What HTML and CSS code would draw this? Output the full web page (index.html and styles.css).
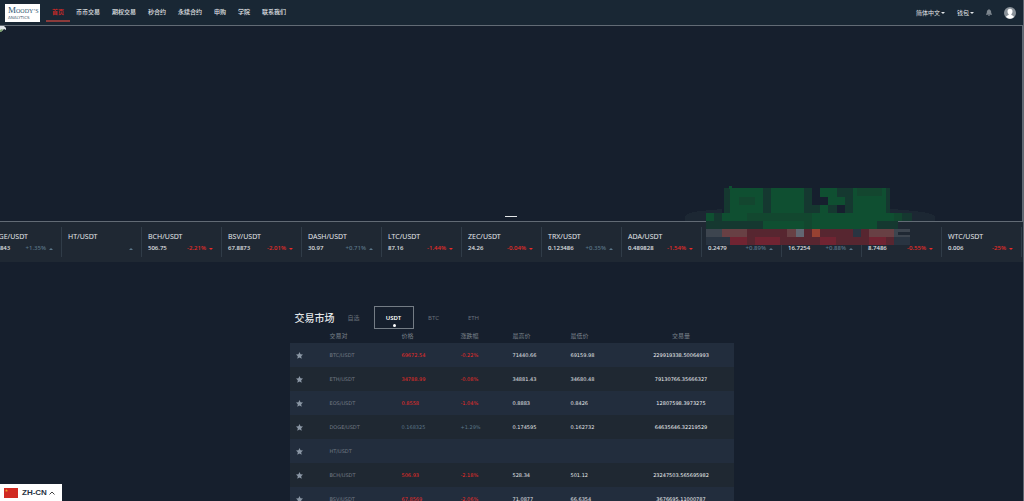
FILE: index.html
```html
<!DOCTYPE html>
<html lang="zh-CN">
<head>
<meta charset="utf-8">
<title>交易市场</title>
<link rel="stylesheet" href="styles.css">
</head>
<body>
<header class="topbar">
  <a class="logo" href="#"><span class="logo-name">M<small>OODY’S</small></span><span class="logo-sub">ANALYTICS</span></a>
  <nav class="nav">
    <a class="active" href="#">首页</a><a href="#">币币交易</a><a href="#">期权交易</a><a href="#">秒合约</a><a href="#">永续合约</a><a href="#">申购</a><a href="#">学院</a><a href="#">联系我们</a>
  </nav>
  <div class="tools">
    <button class="drop" type="button">简体中文<i class="tri down"></i></button>
    <button class="drop" type="button">钱包<i class="tri down"></i></button>
    <button class="icon" type="button" aria-label="通知"><svg class="bell" viewBox="0 0 14 16"><path d="M7 0a1.200 1.200 0 0 1 1.200 1.300C10.600 2 12 4 12 6.500c0 3.500.8 4.500 2 5.500v1H0v-1c1.200-1 2-2 2-5.500C2 4 3.400 2 5.800 1.300A1.200 1.200 0 0 1 7 0zM5 14h4a2 2 0 0 1-4 0z"/></svg></button>
    <button class="icon" type="button" aria-label="账户"><svg class="avatar" viewBox="0 0 24 24"><circle cx="12" cy="12" r="12" fill="#8a9299"/><path fill="#fff" d="M12 3.500c3.200 0 5 2.200 5 5.300 0 2.200-1 4.300-2.300 5.400v1.800c1.800 1 4.300 1.500 5.300 3.500A11.500 11.500 0 0 1 12 23.500 11.500 11.500 0 0 1 4 19.500c1-2 3.500-2.500 5.300-3.500v-1.800C8 13.100 7 11 7 8.800c0-3.100 1.800-5.300 5-5.300z"/></svg></button>
  </div>
</header>
<main>
  <section class="hero">
    <svg class="broken" viewBox="0 0 7 7"><path fill="#dfe5e8" d="M0 0h4l2 2v2L4 3 2 5 0 6z"/><path fill="#7ba06f" d="M0 4l2-1 1 1-2 2H0z"/></svg>
    <button class="dash" type="button" aria-label="1"></button>
    <svg class="mosaic" viewBox="0 0 250 66" aria-hidden="true" shape-rendering="crispEdges">
      <path fill="#1c2733" d="M0 41v-5c5-6 25-5 45-8h150c20 2 50 3 55 8v5z"/>
      <path fill="#153830" d="M37 8h168v25H37zM21 33h206v8H21zM21 41h192v8H21z"/>
      <path fill="#161f2e" d="M37 8h2v25h-2zM127 17h18v8h-18zM152 25h8v8h-8zM127 8h9v9h-9z"/>
      <path fill="#0f4f31" d="M45 8h33v25H45zM86 8h33v25H86zM135 8h17v9h-17zM143 17h17v8h-17zM135 25h8v8h-8zM168 8h33v25h-33z"/>
      <path fill="#0f4f31" d="M21 33h8v8h-8zM37 33h25v8H37zM127 33h82v8h-82zM78 41h114v8H78z"/>
      <path fill="#12472f" d="M62 33h65v8H62zM209 33h8v8h-8zM119 41h8v8h-8z"/>
      <path fill="#0f4f31" d="M44 6h3v3h-3z"/><path fill="#13462f" d="M54 17h16v8H54zM172 8h25v8h-25z"/>
      <path fill="#572630" d="M62 49h147v16H62z"/>
      <path fill="#702432" d="M45 57h17v8H45zM70 57h25v8H70zM135 57h16v8h-16zM184 57h17v8h-17z"/>
      <path fill="#684044" d="M37 49h25v8H37zM102 49h9v8h-9zM184 49h25v8h-25z"/>
      <path fill="#3d454f" d="M21 49h16v8H21zM209 49h16v3h-12v3h12v2h-16z"/>
      <path fill="#293441" d="M21 57h24v8H21zM209 57h16v8h-16zM168 49h8v8h-8z"/>
      <path fill="#626672" d="M111 49h8v8h-8z"/><path fill="#974132" d="M127 49h8v8h-8z"/>
    </svg>
  </section>
  <section class="ticker" id="ticker"></section>
  <section class="market">
    <div class="tabs">
      <h2>交易市场</h2>
      <button type="button">自选</button><button class="on" type="button">USDT</button><button type="button">BTC</button><button type="button">ETH</button>
    </div>
    <table>
      <thead><tr><th class="c-star"></th><th class="c-pair">交易对</th><th class="c-price">价格</th><th class="c-change">涨跌幅</th><th class="c-high">最高价</th><th class="c-low">最低价</th><th class="c-vol">交易量</th></tr></thead>
      <tbody id="rows"></tbody>
    </table>
  </section>
</main>
<button class="lang" type="button"><svg class="flag" viewBox="0 0 14 10"><path fill="#d12a22" d="M0 0h14v10H0z"/><path fill="#f0a030" d="M2.500 1l.4 1.100H4l-.9.700.3 1.100-.9-.7-.9.7.3-1.100-.9-.7h1.100z"/></svg>ZH-CN<svg class="chev" viewBox="0 0 6 4"><path d="M.5 3.500L3 1l2.500 2.500"/></svg></button>
<script src="app.js"></script>
</body>
</html>
```
FILE: styles.css
```css
* { box-sizing: border-box; }
body {
  margin: 0;
  height: 100vh;
  overflow: hidden;
  border-right: 1px solid #5d6670;
  background: #161f2d;
  color: #e2e5e8;
  font: 6px/8px "Noto Sans", "Noto Sans CJK SC", sans-serif;
}
button { border: 0; padding: 0; background: none; color: inherit; font: inherit; }
a { color: inherit; text-decoration: none; }
.topbar { display: flex; align-items: center; height: 25px; padding: 0 7px 0 5px; background: #192734; }
.logo {
  display: flex; flex-direction: column; justify-content: center;
  flex: none; width: 35px; height: 18px; padding-left: 3px; margin-right: 6px;
  background: #fff; color: #2d5673; font-family: "Liberation Serif", serif;
}
.logo-name { font-size: 9px; line-height: 8px; white-space: nowrap; }
.logo-name small { font-size: 6px; }
.logo-sub { font: 4px/5px "DejaVu Sans", sans-serif; color: #48606f; }
.nav { display: flex; flex: 1; }
.nav a { padding: 2px 6px 4px; border-bottom: 2px solid transparent; font-weight: 500; margin-top: 2px; }
.nav .active { color: #e02a26; border-color: #8b3b3b; }
.tools { display: flex; align-items: center; gap: 12px; }
.drop { display: flex; align-items: center; gap: 1px; }
.icon { display: flex; }
.bell { width: 6px; height: 7px; fill: #7c858d; }
.avatar { width: 12px; height: 12px; }
.tri { border: 2px solid transparent; }
.tri.down { border-top-color: currentColor; border-bottom: 0; }
.tri.up { border-bottom-color: currentColor; border-top: 0; }
.hero { position: relative; height: 197px; border: 1px solid #626b75; border-left: 0; }
.broken { display: block; width: 7px; height: 7px; }
.dash { position: absolute; left: 50%; bottom: 4px; width: 12px; height: 1px; margin-left: -6px; background: #e3e6e8; }
.mosaic { position: absolute; z-index: 1; left: 67%; top: 154px; width: 250px; height: 66px; }
.ticker { display: flex; justify-content: flex-end; overflow: hidden; height: 40px; padding: 5px 1px 5px 0; background: #1f2833; }
.coin {
  flex: none; width: 80px; padding: 4px 8px 0 6px;
  border-right: 1px solid #303c48; font-size: 6px; line-height: 11px;
}
.coin h3 { margin: 0 0 1px; font-size: 7px; line-height: 11px; font-weight: 400; }
.coin p { display: flex; justify-content: space-between; margin: 0; font-weight: 500; }
.coin span { display: flex; align-items: center; gap: 3px; }
.up { color: #5b7689; }
.down { color: #ea2b27; }
.drop .down { color: inherit; }
.market { width: 444px; margin: 44px auto 0; }
.tabs { display: flex; align-items: center; color: #69717b; }
.tabs h2 { margin: 0 0 0 5px; width: 39px; white-space: nowrap; font-size: 10px; line-height: 14px; font-weight: 500; color: #e2e5e8; }
.tabs button { width: 40px; height: 23px; }
.tabs .on { position: relative; border: 1px solid #747c85; color: #fff; font-weight: 600; }
.tabs .on::after { content: ""; position: absolute; left: 50%; bottom: 1px; width: 3px; height: 3px; margin-left: -1px; border-radius: 50%; background: #fff; }
table { width: 100%; border-collapse: collapse; table-layout: fixed; }
th, td { padding: 0; text-align: left; font-weight: 400; white-space: nowrap; }
th { height: 14px; color: #7b838b; }
td { height: 24px; font-family: "DejaVu Sans", sans-serif; font-size: 5px; }
tbody tr { background: #1f2832; }
tbody tr:nth-child(odd) { background: #222d3d; }
.c-star { width: 40px; }
.c-pair { width: 72px; }
.c-price { width: 59px; }
.c-change { width: 52px; }
.c-high { width: 58px; }
.c-low { width: 58px; }
.c-vol, .vol { text-align: center; }
.vol { color: #f0f2f4; }
.pair { color: #737b85; }
.star { display: block; width: 7px; height: 7px; margin-left: 6px; fill: #8b97a5; }
.lang {
  position: fixed; left: 0; bottom: 0; display: flex; align-items: center; gap: 4px;
  height: 17px; padding: 0 7px 0 4px; background: #fff; color: #26323f;
  font: bold 8px/10px "Liberation Sans", sans-serif;
}
.flag { width: 14px; height: 10px; }
.chev { width: 6px; height: 4px; margin-left: -2px; fill: none; stroke: #444; }
```
FILE: app.js
```js
const coins = [
  ["DOGE/USDT", "0.16843", "+1.35%"], ["HT/USDT", "", ""], ["BCH/USDT", "506.75", "-2.21%"],
  ["BSV/USDT", "67.8873", "-2.01%"], ["DASH/USDT", "30.97", "+0.71%"], ["LTC/USDT", "87.16", "-1.44%"],
  ["ZEC/USDT", "24.26", "-0.04%"], ["TRX/USDT", "0.123486", "+0.35%"], ["ADA/USDT", "0.489828", "-1.54%"],
  ["", "0.2479", "+0.89%"], ["", "16.7254", "+0.88%"], ["", "8.7486", "-0.55%"], ["WTC/USDT", "0.006", "-25%"]
];
const tone = (c) => (c.startsWith("-") ? "down" : "up");
document.getElementById("ticker").innerHTML = coins.map(([n, p, c]) =>
  `<article class="coin"><h3>${n || "&nbsp;"}</h3><p>${p || "&nbsp;"}<span class="${tone(c)}">${c}<i class="tri ${tone(c)}"></i></span></p></article>`
).join("");

const rows = [
  ["BTC/USDT", "69672.54", "-0.22%", "71440.66", "69159.98", "229919338.50064993"],
  ["ETH/USDT", "34788.99", "-0.08%", "34881.43", "34680.48", "79130766.35666327"],
  ["EOS/USDT", "0.8558", "-1.04%", "0.8883", "0.8426", "12807598.3973275"],
  ["DOGE/USDT", "0.168325", "+1.29%", "0.174595", "0.162732", "64635646.32219529"],
  ["HT/USDT", "", "", "", "", ""],
  ["BCH/USDT", "506.93", "-2.18%", "528.34", "501.12", "23247503.565695982"],
  ["BSV/USDT", "67.8569", "-2.06%", "71.0877", "66.6354", "3676695.11000787"]
];
const star = '<svg class="star" viewBox="0 0 14 14"><path d="M7 0l2.100 4.600 4.900.6-3.600 3.400 1 5L7 11.100l-4.400 2.500 1-5L0 5.200l4.900-.6z"/></svg>';
document.getElementById("rows").innerHTML = rows.map(([n, p, c, h, l, v]) =>
  `<tr><td>${star}</td><td class="pair">${n}</td><td class="${tone(c)}">${p}</td><td class="${tone(c)}">${c}</td><td>${h}</td><td>${l}</td><td class="vol">${v}</td></tr>`
).join("");
```
